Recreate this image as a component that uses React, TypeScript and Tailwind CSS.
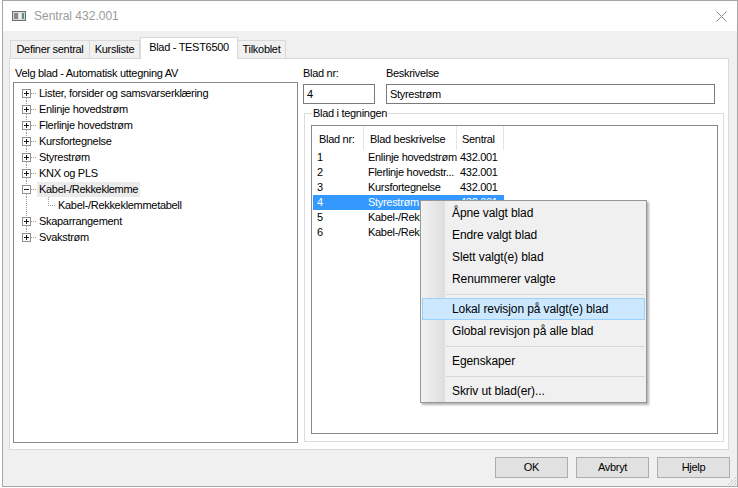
import React from 'react'

const treeItems = [
  'Lister, forsider og samsvarserklæring',
  'Enlinje hovedstrøm',
  'Flerlinje hovedstrøm',
  'Kursfortegnelse',
  'Styrestrøm',
  'KNX og PLS',
  'Kabel-/Rekkeklemme',
  'Kabel-/Rekkeklemmetabell',
  'Skaparrangement',
  'Svakstrøm',
]

const rows = [
  ['1', 'Enlinje hovedstrøm'],
  ['2', 'Flerlinje hovedstr...'],
  ['3', 'Kursfortegnelse'],
  ['4', 'Styrestrøm'],
  ['5', 'Kabel-/Rekkeklemme'],
  ['6', 'Kabel-/Rekkeklemme'],
]

function TreeRow({ label, index }: { label: string; index: number }) {
  const first = index === 0
  const last = index === treeItems.length - 1
  const child = index === 7
  const expanded = index === 6

  if (child) {
    return (
      <div className="flex h-[16px] items-center">
        <svg width="42" height="16" className="shrink-0">
          <line x1="12.5" y1="0" x2="12.5" y2="16" stroke="#a0a0a0" strokeDasharray="1 1" />
          <line x1="34.5" y1="0" x2="34.5" y2="9" stroke="#a0a0a0" strokeDasharray="1 1" />
          <line x1="36" y1="8.5" x2="42" y2="8.5" stroke="#a0a0a0" strokeDasharray="1 1" />
        </svg>
        <span className="pl-[2px] whitespace-nowrap">{label}</span>
      </div>
    )
  }

  return (
    <div className="flex h-[16px] items-center">
      <svg width="23" height="16" className="shrink-0">
        {!first && <line x1="12.5" y1="0" x2="12.5" y2="4" stroke="#a0a0a0" strokeDasharray="1 1" />}
        {(!last || expanded) && <line x1="12.5" y1="13" x2="12.5" y2="16" stroke="#a0a0a0" strokeDasharray="1 1" />}
        <line x1="17" y1="8.5" x2="23" y2="8.5" stroke="#a0a0a0" strokeDasharray="1 1" />
        <rect x="8.5" y="4.5" width="8" height="8" fill="#fff" stroke="#919191" />
        <line x1="10" y1="8.5" x2="15" y2="8.5" stroke="#1c1c1c" />
        {!expanded && <line x1="12.5" y1="6" x2="12.5" y2="11" stroke="#1c1c1c" />}
      </svg>
      <span className={`px-[2px] whitespace-nowrap leading-[15px] ${expanded ? 'bg-[#ebebeb]' : ''}`}>{label}</span>
    </div>
  )
}

function MenuItem({ label, active }: { label: string; active?: boolean }) {
  if (active) {
    return (
      <div className="mx-[1px] flex h-[22px] items-center border border-[#99d1ff] bg-[#cce8ff] pl-[29px]">
        {label}
      </div>
    )
  }
  return <div className="flex h-[22px] items-center pl-[31px]">{label}</div>
}

function MenuSep() {
  return (
    <div className="flex h-[8px] items-center">
      <div className="ml-[25px] mr-[1px] h-px flex-1 bg-[#d7d7d7]" />
    </div>
  )
}

export default function App() {
  return (
    <div className="relative h-[488px] w-[738px] overflow-hidden bg-white font-['Liberation_Sans',Arial,sans-serif] text-[11px] tracking-[-0.3px] text-black">
      <div className="relative ml-[2px] flex h-[487px] w-[736px] flex-col border border-[#a6a6a6]">
        {/* title bar */}
        <div className="flex h-[30px] items-center bg-white">
          <svg width="14" height="10" className="ml-[9px]" viewBox="0 0 14 10">
            <rect x="0.5" y="0.5" width="13" height="9" fill="#d9d9d9" stroke="#6f6f6f" />
            <rect x="2" y="2" width="4" height="6" fill="#8c8c8c" />
            <rect x="7" y="2" width="2" height="6" fill="#f2f2f2" />
            <rect x="10" y="2" width="2" height="6" fill="#4c9a8f" />
          </svg>
          <span className="ml-[8px] text-[12px] tracking-[0px] text-[#9b9b9b]">Sentral 432.001</span>
          <svg width="11" height="11" className="ml-auto mr-[10px]" viewBox="0 0 11 11">
            <path d="M0.5 0.5 L10.5 10.5 M10.5 0.5 L0.5 10.5" stroke="#8a8a8a" strokeWidth="1" />
          </svg>
        </div>

        {/* body */}
        <div className="flex flex-1 flex-col bg-[#f0f0f0]">
          {/* tabs */}
          <div className="relative z-10 flex h-[27px] items-end pl-[7px]">
            <div className="flex h-[18px] w-[80px] items-center justify-center border border-b-0 border-[#d9d9d9] bg-[#f0f0f0]">
              Definer sentral
            </div>
            <div className="flex h-[18px] w-[50px] items-center justify-center border border-b-0 border-l-0 border-[#d9d9d9] bg-[#f0f0f0]">
              Kursliste
            </div>
            <div className="mb-[-1px] flex h-[22px] w-[98px] items-center justify-center border border-b-0 border-[#d9d9d9] bg-white pb-[2px]">
              Blad - TEST6500
            </div>
            <div className="flex h-[18px] w-[48px] items-center justify-center border border-b-0 border-l-0 border-[#d9d9d9] bg-[#f0f0f0]">
              Tilkoblet
            </div>
          </div>

          {/* tab panel */}
          <div className="ml-[6px] flex h-[392px] w-[720px] border border-[#d9d9d9] bg-white">
            {/* left column */}
            <div className="ml-[3px] flex flex-col pt-[8px]">
              <div className="h-[13px] pl-[2px] leading-[13px]">Velg blad - Automatisk uttegning AV</div>
              <div className="mt-[2px] h-[361px] w-[285px] border border-[#828790] pl-[0px] pt-[2px]">
                {treeItems.map((t, i) => (
                  <TreeRow key={i} label={t} index={i} />
                ))}
              </div>
            </div>

            {/* right column */}
            <div className="ml-[5px] flex flex-col pt-[8px]">
              <div className="flex gap-[11px]">
                <div className="flex flex-col">
                  <div className="h-[13px] leading-[13px]">Blad nr:</div>
                  <div className="mt-[4px] flex h-[20px] w-[72px] items-center border border-[#7a7a7a] pl-[3px]">4</div>
                </div>
                <div className="flex flex-col">
                  <div className="h-[13px] leading-[13px]">Beskrivelse</div>
                  <div className="mt-[4px] flex h-[20px] w-[329px] items-center border border-[#7a7a7a] pl-[3px]">Styrestrøm</div>
                </div>
              </div>

              <fieldset className="ml-[1px] mt-[3px] w-[420px] border border-[#dcdcdc] pb-[7px]">
                <legend className="ml-[7px] px-[1px] leading-[13px]">Blad i tegningen</legend>
                <div className="ml-[6px] mt-[5px] h-[309px] w-[407px] border border-[#828790]">
                  <div className="flex h-[24px]">
                    <div className="flex w-[52px] items-center border-r border-[#e5e5e5] pl-[7px] pt-[2px]">Blad nr:</div>
                    <div className="flex w-[93px] items-center border-r border-[#e5e5e5] pl-[6px] pt-[2px]">Blad beskrivelse</div>
                    <div className="flex w-[47px] items-center border-r border-[#e5e5e5] pl-[5px] pt-[2px]">Sentral</div>
                  </div>
                  {rows.map(([n, d]) => {
                    const sel = n === '4'
                    return (
                      <div
                        key={n}
                        className={`ml-[1px] flex h-[15px] w-[191px] items-center whitespace-nowrap ${sel ? 'bg-[#3399ff] text-white' : ''}`}
                      >
                        <div className="w-[51px] pl-[4px]">{n}</div>
                        <div className="w-[93px] overflow-hidden pl-[4px]">{d}</div>
                        <div className="w-[47px] pl-[3px]">432.001</div>
                      </div>
                    )
                  })}
                </div>
              </fieldset>
            </div>
          </div>

          {/* buttons */}
          <div className="mt-[7px] flex justify-end gap-[8px] pr-[7px]">
            {['OK', 'Avbryt', 'Hjelp'].map((b) => (
              <div key={b} className="flex h-[21px] w-[73px] items-center justify-center border border-[#adadad] bg-[#e1e1e1]">
                {b}
              </div>
            ))}
          </div>
        </div>

        {/* resize grip */}
        <svg width="10" height="10" className="absolute bottom-0 right-0" viewBox="0 0 10 10">
          <path d="M9 1 L1 9 M9 4 L4 9 M9 7 L7 9" stroke="#b5b5b5" strokeDasharray="1 1" />
        </svg>
      </div>

      {/* context menu */}
      <div className="absolute left-[420px] top-[200px] flex h-[203px] w-[227px] flex-col border border-[#979797] bg-[linear-gradient(to_right,#f2f2f2_0px,#dedede_24px,#f0f0f0_24px)] pt-[1px] text-[12px] tracking-[-0.1px] shadow-[2px_2px_2px_rgba(0,0,0,0.3)]">
        <MenuItem label="Åpne valgt blad" />
        <MenuItem label="Endre valgt blad" />
        <MenuItem label="Slett valgt(e) blad" />
        <MenuItem label="Renummerer valgte" />
        <MenuSep />
        <MenuItem label="Lokal revisjon på valgt(e) blad" active />
        <MenuItem label="Global revisjon på alle blad" />
        <MenuSep />
        <MenuItem label="Egenskaper" />
        <MenuSep />
        <MenuItem label="Skriv ut blad(er)..." />
      </div>
    </div>
  )
}
